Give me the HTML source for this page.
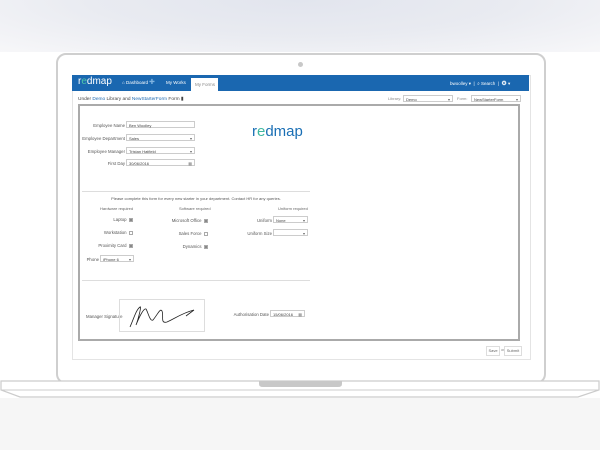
<!DOCTYPE html><html><head><style>
body{margin:0;width:600px;height:450px;position:relative;overflow:hidden;background:#fff;font-family:"Liberation Sans",sans-serif;font-size:4.5px;color:#444}
.a{position:absolute}
.inp{position:absolute;border:1px solid #ccc;background:#fff;height:7px;font-size:4px;line-height:7px;padding-left:2px;box-sizing:border-box;color:#444}
.sel:after{content:"▾";position:absolute;right:2px;top:0;font-size:4px;color:#666}
.lbl{position:absolute;text-align:right;font-size:4.3px;color:#555}
.cb{display:inline-block;width:2.5px;height:2.5px;border:0.5px solid #aaa;margin-left:2px;vertical-align:middle}
.ck{background:#888}
</style></head><body>
<div class="a" style="left:0;top:0;width:600px;height:52px;background:radial-gradient(ellipse at 50% 0%,#e2e5ee 0%,#e9ebf1 50%,#f7f7f9 100%)"></div>
<div class="a" style="left:0;top:398px;width:600px;height:52px;background:#f6f6f6"></div>
<div class="a" style="left:56px;top:53px;width:486px;height:327px;border:2px solid #cfcfcf;border-radius:10px"></div>
<div class="a" style="left:298px;top:62px;width:5px;height:5px;border-radius:50%;background:#c8c8c8"></div>
<div class="a" style="left:72px;top:75px;width:457px;height:283px;border:1px solid #e4e4e4"></div>
<svg class="a" style="left:0;top:379px" width="600" height="20"><path d="M1 2 H599 V11 L578 18 H20 L1 11 Z" fill="#fff" stroke="#ccc" stroke-width="1.2"/><path d="M1 11 H599" stroke="#ccc" stroke-width="1"/><path d="M259 2 H342 V5 Q342 8 338 8 H263 Q259 8 259 5 Z" fill="#c8c8c8"/></svg>
<!-- nav -->
<div class="a" style="left:72px;top:75px;width:457px;height:16px;background:#1a67b0"></div>
<div class="a" style="left:78px;top:76px;font-size:10px;color:#fff;line-height:12px">r<span style="color:#4fc7a8">e</span>dmap</div>
<div class="a" style="left:122px;top:80px;font-size:4.5px;color:#fff">⌂ Dashboard</div>
<div class="a" style="left:149px;top:78px;font-size:7px;color:#7fb3e0">✚</div>
<div class="a" style="left:166px;top:80px;font-size:4.5px;color:#fff">My Works</div>
<div class="a" style="left:191px;top:78px;width:27px;height:13px;background:#fff;font-size:4.5px;color:#888;line-height:13px;padding-left:4px;box-sizing:border-box">My Forms</div>
<div class="a" style="left:450px;top:80px;font-size:4.5px;color:#fff;white-space:nowrap">bwoolley ▾ &nbsp;|&nbsp; ⌕ Search &nbsp;|&nbsp; <b style="font-size:6px">⚙</b> ▾</div>
<!-- subtitle -->
<div class="a" style="left:78px;top:97px;font-size:4.8px;color:#444">Under <span style="color:#1a67b0">Demo</span> Library and <span style="color:#1a67b0">NewStarterForm</span> Form ▮</div>
<div class="a" style="left:388px;top:96px;font-size:4px;color:#888">Library:</div>
<div class="inp sel" style="left:403px;top:95px;width:50px">Demo</div>
<div class="a" style="left:457px;top:96px;font-size:4px;color:#888">Form:</div>
<div class="inp sel" style="left:471px;top:95px;width:50px">NewStarterForm</div>
<!-- frame -->
<div class="a" style="left:78px;top:104px;width:442px;height:237px;border:2px solid #aaa;box-sizing:border-box"></div>
<div class="lbl" style="left:80px;top:123px;width:45px">Employee Name</div>
<div class="inp" style="left:126px;top:121px;width:69px">Ben Woolley</div>
<div class="lbl" style="left:80px;top:136px;width:45px">Employee Department</div>
<div class="inp sel" style="left:126px;top:134px;width:69px">Sales</div>
<div class="lbl" style="left:80px;top:149px;width:45px">Employee Manager</div>
<div class="inp sel" style="left:126px;top:147px;width:69px">Tristan Hatfield</div>
<div class="lbl" style="left:80px;top:161px;width:45px">First Day</div>
<div class="inp" style="left:126px;top:159px;width:69px">30/06/2016<span style="position:absolute;right:2px;color:#777">▦</span></div>
<div class="a" style="left:252px;top:123px;font-size:15px;line-height:17px;color:#1a6fb5">r<span style="color:#3fb8a0">e</span>dmap</div>
<div class="a" style="left:82px;top:191px;width:228px;height:1px;background:#ddd"></div>
<div class="a" style="left:82px;top:196px;width:228px;text-align:center;font-size:4px;color:#555">Please complete this form for every new starter in your department. Contact HR for any queries.</div>
<div class="a" style="left:100px;top:206px;font-size:4px;color:#666">Hardware required</div>
<div class="a" style="left:179px;top:206px;font-size:4px;color:#666">Software required</div>
<div class="a" style="left:278px;top:206px;font-size:4px;color:#666">Uniform required</div>
<div class="lbl" style="left:90px;top:217px;width:43px">Laptop<span class="cb ck"></span></div>
<div class="lbl" style="left:90px;top:230px;width:43px">Workstation<span class="cb"></span></div>
<div class="lbl" style="left:90px;top:243px;width:43px">Proximity Card<span class="cb ck"></span></div>
<div class="lbl" style="left:160px;top:218px;width:48px">Microsoft Office<span class="cb ck"></span></div>
<div class="lbl" style="left:160px;top:231px;width:48px">Sales Force<span class="cb"></span></div>
<div class="lbl" style="left:160px;top:244px;width:48px">Dynamics<span class="cb ck"></span></div>
<div class="lbl" style="left:240px;top:218px;width:32px">Uniform</div>
<div class="inp sel" style="left:273px;top:216px;width:35px">None</div>
<div class="lbl" style="left:240px;top:231px;width:32px">Uniform Size</div>
<div class="inp sel" style="left:273px;top:229px;width:35px"></div>
<div class="lbl" style="left:80px;top:257px;width:19px">Phone</div>
<div class="inp sel" style="left:100px;top:255px;width:34px">iPhone 6</div>
<div class="a" style="left:82px;top:280px;width:228px;height:1px;background:#ddd"></div>
<div class="a" style="left:86px;top:314px;font-size:4.3px;color:#555">Manager Signature</div>
<div class="a" style="left:119px;top:299px;width:86px;height:33px;border:1px solid #ddd;box-sizing:border-box">
<svg width="86" height="33" viewBox="0 0 86 33"><path d="M10 27 C14 18 16 10 20 7 C22 5 18 20 16 25 C20 15 24 8 26 9 C28 12 30 22 33 20 C38 14 40 8 42 11 C44 16 40 24 47 22 C54 19 62 13 74 10 M66 16 L74 10" fill="none" stroke="#222" stroke-width="0.8"/></svg></div>
<div class="lbl" style="left:225px;top:312px;width:44px">Authorisation Date</div>
<div class="inp" style="left:270px;top:310px;width:35px">15/06/2016<span style="position:absolute;right:2px;color:#777">▦</span></div>
<div class="a" style="left:486px;top:346px;width:12px;height:8px;border:1px solid #ddd;font-size:4px;line-height:8px;text-align:center;color:#666">Save</div>
<div class="a" style="left:501px;top:347px;font-size:4px;color:#888">or</div>
<div class="a" style="left:504px;top:346px;width:16px;height:8px;border:1px solid #ddd;font-size:4px;line-height:8px;text-align:center;color:#666">Submit</div>
</body></html>
